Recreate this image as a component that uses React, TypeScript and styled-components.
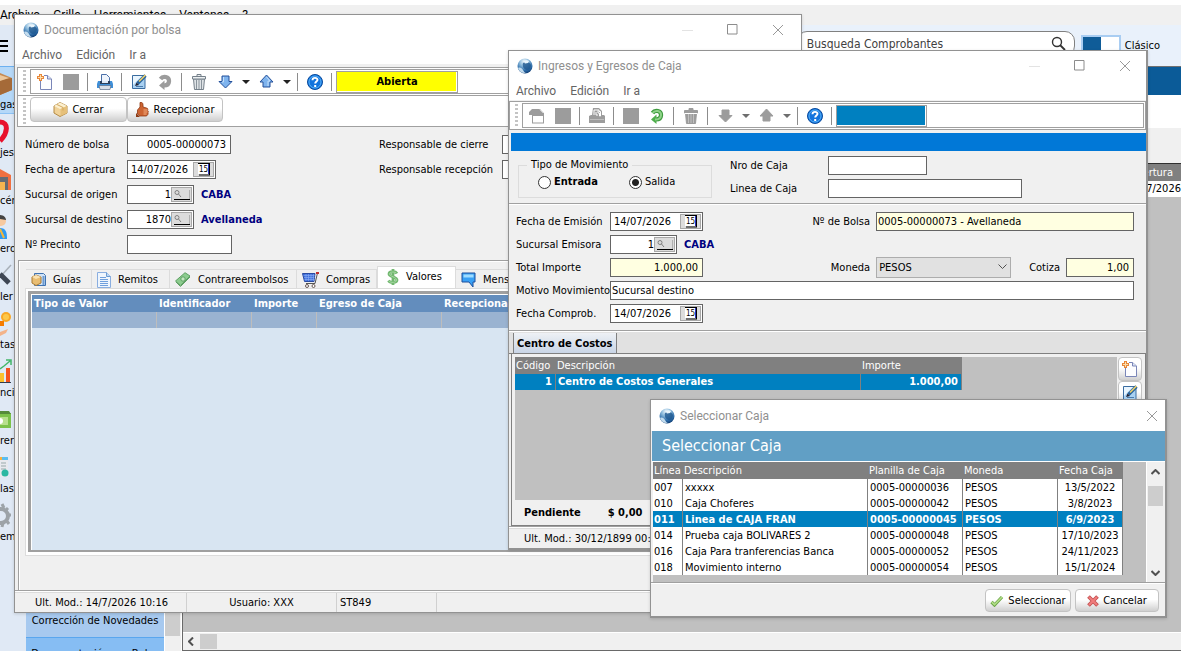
import React from 'react';
import styled, { createGlobalStyle, css } from 'styled-components';

const ui = "'DejaVu Sans Condensed', 'DejaVu Sans', 'Noto Sans', sans-serif";
const chrome = "Roboto, 'Open Sans', sans-serif";

const Global = createGlobalStyle`
  * { box-sizing: border-box; }
  html, body { margin: 0; padding: 0; }
  body { font: 11px/16px ${ui}; color: #000; background: #c0c0c0; overflow: hidden; }
  button, input, select { font: inherit; color: inherit; margin: 0; padding: 0; border-radius: 0; }
  svg { display: block; flex: none; }
  table { border-collapse: separate; border-spacing: 0; }
`;

/* ---------- Main application behind the windows ---------- */

const Shell = styled.div`
  position: relative;
  display: flex;
  flex-direction: column;
  height: 100vh;
  overflow: hidden;
  background: #fff;
  padding-top: 5px;
`;
const MainMenu = styled.nav`
  display: flex;
  gap: 13px;
  height: 20px;
  flex: none;
  background: #f0f0f0;
  font: 12px/20px ${chrome};
`;
const MenuLink = styled.a`
  color: inherit;
  text-decoration: none;
  white-space: nowrap;
`;
const ShellBody = styled.div`
  display: flex;
  flex: 1;
  min-height: 0;
`;
const Rail = styled.nav`
  display: flex;
  flex-direction: column;
  width: 26px;
  flex: none;
  background: #e0e9f5;
`;
const Burger = styled.div`
  display: flex;
  align-items: center;
  height: 41px;
`;
const RailItem = styled.a<{ $on?: boolean }>`
  display: flex;
  flex-direction: column;
  justify-content: flex-end;
  height: 48px;
  color: #000;
  text-decoration: none;
  white-space: nowrap;
  overflow: hidden;
  border-top: 1px solid ${p => (p.$on ? '#6cb0f0' : 'transparent')};
  border-bottom: 1px solid ${p => (p.$on ? '#8cc2f4' : 'transparent')};
  background: ${p => (p.$on ? '#b5d8f8' : 'transparent')};
  svg { margin-bottom: 1px; }
`;
const Workspace = styled.main`
  display: flex;
  flex-direction: column;
  flex: 1;
  min-width: 0;
`;
const TopBar = styled.div`
  display: flex;
  justify-content: flex-end;
  align-items: flex-start;
  flex: none;
  height: 41px;
  padding: 6px 21px 0 0;
  background: #e9f1fb;
`;
const SearchBox = styled.label`
  display: flex;
  align-items: center;
  width: 278px;
  height: 25px;
  margin-right: 6px;
  padding: 0 8px 0 9px;
  background: #fff;
  border: 1px solid #808080;
  border-radius: 10px;
  input {
    flex: 1;
    min-width: 0;
    border: 0;
    outline: 0;
    background: none;
    font-size: 12px;
    color: #404040;
  }
`;
const ModeSwitch = styled.button`
  width: 40px;
  height: 20px;
  margin: 4px 4px 0 0;
  border: 2px solid #a9cdf2;
  background: linear-gradient(90deg, #0f5c98 0 18px, #fff 18px);
`;
const ModeLabel = styled.span`
  padding-top: 7px;
`;
const Band = styled.div<{ $h: number; $bg: string; $line?: string }>`
  flex: none;
  height: ${p => p.$h}px;
  background: ${p => p.$bg};
  border-top: 1px solid ${p => p.$line || p.$bg};
`;
const Lower = styled.div`
  display: flex;
  flex: 1;
  min-height: 0;
`;
const Tree = styled.div`
  display: flex;
  flex-direction: column;
  justify-content: flex-end;
  width: 138px;
  background: #e0e9f5;
`;
const TreeItem = styled.a<{ $on?: boolean }>`
  color: #000;
  text-decoration: none;
  white-space: nowrap;
  text-align: center;
  overflow: hidden;
  background: ${p => (p.$on ? '#86bdf3' : '#a7c9ef')};
  border-top: 1px solid ${p => (p.$on ? '#5aa6ee' : '#a7c9ef')};
  height: ${p => (p.$on ? 14 : 29)}px;
  padding-top: ${p => (p.$on ? 8 : 4)}px;
`;
const TreeScroll = styled.div`
  display: flex;
  width: 18px;
  padding: 0 1px 15px 0;
  background: #f0f0f0;
  border-left: 1px solid #fff;
  border-right: 1px solid #fff;
  &::before { content: ''; flex: 1; background: #cdcdcd; }
`;
const Sheet = styled.div`
  display: flex;
  flex-direction: column;
  flex: 1;
  min-width: 0;
  background: #c0c0c0;
  border-left: 1px solid #696969;
  border-top: 1px solid #303030;
  border-bottom: 1px solid #696969;
`;
const SheetTable = styled.table`
  width: 100%;
  th, td { text-align: right; font-weight: 400; padding: 0; }
  th { height: 17px; padding-right: 8px; background: #808080; color: #fff; }
  td { height: 16px; background: #fff; }
`;
const SheetScroll = styled.div`
  display: flex;
  align-items: center;
  gap: 6px;
  height: 18px;
  margin-top: auto;
  padding-left: 5px;
  background: #f0f0f0;
  border-top: 1px solid #fff;
  &::after { content: ''; width: 17px; height: 15px; background: #cdcdcd; }
`;

/* ---------- Windows ---------- */

const Frame = styled.section<{ $left: number; $top: number; $right: number; $heavy?: boolean }>`
  position: absolute;
  left: ${p => p.$left}px;
  top: ${p => p.$top}px;
  right: ${p => p.$right}px;
  display: flex;
  flex-direction: column;
  background: #f0f0f0;
  border: 1px solid #929292;
  ${p => p.$heavy && css`border-right-width: 2px; border-bottom-width: 2px;`}
  box-shadow: 0 1px 3px rgba(0, 0, 0, 0.15);
`;
const TitleBar = styled.header<{ $h: number; $end: number }>`
  display: flex;
  align-items: center;
  gap: 5px;
  flex: none;
  height: ${p => p.$h}px;
  padding: 0 ${p => p.$end}px 0 8px;
  background: #fff;
  color: #8f8f8f;
  font: 12px/16px ${chrome};
`;
const Title = styled.h1`
  flex: 1;
  margin: 0;
  font: inherit;
`;
const CaptionButtons = styled.div`
  display: flex;
  gap: 34px;
`;
const CaptionButton = styled.button`
  border: 0;
  background: none;
`;
const WindowMenu = styled.nav<{ $h: number }>`
  display: flex;
  gap: 14px;
  flex: none;
  height: ${p => p.$h}px;
  padding: 0 7px;
  background: #fff;
  border-bottom: ${p => p.$h - 20}px solid #f0f0f0;
  color: #646464;
  font: 12px/22px ${chrome};
`;
const Dock = styled.div<{ $inset: number }>`
  flex: none;
  margin-left: ${p => p.$inset}px;
  padding-top: 1px;
  background: #fff;
  border: 1px solid #a0a0a0;
`;
const DockRow = styled.div<{ $second?: boolean }>`
  display: flex;
  height: ${p => (p.$second ? 31 : 26)}px;
  border-top: ${p => (p.$second ? '1px solid #a0a0a0' : '0')};
  padding: ${p => (p.$second ? '1px 0 0' : '0 1px 1px 0')};
  &::before {
    content: '';
    width: 3px;
    margin: 1px 4px 1px 5px;
    background: repeating-linear-gradient(180deg, #c4c4c4 0 2px, #fff 2px 4px);
  }
`;
const ToolBox = styled.div`
  display: flex;
  align-items: center;
  flex: 1;
  padding-left: 1px;
  border: 1px solid #a0a0a0;
`;
const Tool = styled.button<{ $w?: number }>`
  display: flex;
  align-items: center;
  justify-content: center;
  width: ${p => p.$w || 26}px;
  height: 22px;
  border: 0;
  background: none;
`;
const ToolSep = styled.span`
  width: 1px;
  height: 18px;
  margin: 0 4px 0 3px;
  background: #8c8c8c;
`;
const StateBadge = styled.div<{ $bg: string; $w: number }>`
  width: ${p => p.$w}px;
  height: 22px;
  background: ${p => p.$bg};
  border: 1px solid #a0a0a0;
  box-shadow: inset -1px -1px #fff;
  text-align: center;
  font-weight: 700;
  line-height: 20px;
`;
const SoftButton = styled.button<{ $w: number; $h?: number }>`
  display: flex;
  align-items: center;
  justify-content: center;
  gap: 4px;
  width: ${p => p.$w}px;
  height: ${p => p.$h || 25}px;
  border: 1px solid #c3c3c3;
  border-radius: 4px;
  background: linear-gradient(#fff 45%, #e6e6e6 75%, #cfcfcf);
  white-space: nowrap;
`;

/* ---------- Form parts ---------- */

const FormColumn = styled.div<{ $label: number; $gap: number }>`
  display: grid;
  grid-template-columns: ${p => p.$label}px 1fr;
  grid-auto-rows: 19px;
  row-gap: ${p => p.$gap}px;
  align-items: center;
`;
const Label = styled.label`
  padding-top: 1px;
  white-space: nowrap;
`;
const Line = styled.div`
  display: flex;
  align-items: center;
  min-width: 0;
`;
const Field = styled.div<{ $w?: number; $tint?: boolean }>`
  display: flex;
  width: ${p => (p.$w ? p.$w + 'px' : 'auto')};
  flex: ${p => (p.$w ? 'none' : '1')};
  min-width: 0;
  height: 19px;
  border: 1px solid #646464;
  background: ${p => (p.$tint ? '#ffffe1' : '#fff')};
`;
const TextBox = styled.input<{ $align?: string; $pad?: string }>`
  flex: 1;
  width: 0;
  min-width: 0;
  border: 0;
  outline: 0;
  background: none;
  text-align: ${p => p.$align || 'left'};
  padding: ${p => p.$pad || '0 1px'};
`;
const InnerButton = styled.button<{ $w: number }>`
  display: flex;
  align-items: center;
  justify-content: center;
  width: ${p => p.$w}px;
  height: 15px;
  margin: 1px 1px 0 0;
  border: 1px solid #a8a8a8;
  background: #dcdcdc;
`;
const Branch = styled.strong`
  margin-left: 7px;
  color: #000080;
`;
const Divider = styled.div`
  flex: none;
  height: 2px;
  background: linear-gradient(#a0a0a0 1px, #fff 1px);
`;
const StatusBar = styled.footer`
  display: flex;
  flex: none;
  height: 20px;
  line-height: 20px;
  border-top: 1px solid #dcdcdc;
`;
const StatusCell = styled.div<{ $w: number; $center?: boolean; $pad?: number }>`
  width: ${p => p.$w}px;
  padding-left: ${p => p.$pad || 0}px;
  text-align: ${p => (p.$center ? 'center' : 'left')};
  border-right: 1px solid #d0d0d0;
  white-space: nowrap;
`;

/* ---------- Bag window ---------- */

const BagForm = styled.div`
  display: flex;
  padding: 8px 0 6px 10px;
`;
const BagLeft = styled.div`
  width: 354px;
  flex: none;
`;
const BagRight = styled.div`
  flex: 1;
`;
const BagPanel = styled.div`
  margin-left: 3px;
  padding: 5px 0 34px 7px;
  border: solid #a0a0a0;
  border-width: 1px 0 0 1px;
  box-shadow: inset 1px 1px #fff;
`;
const Tabs = styled.div`
  display: flex;
  align-items: flex-end;
  height: 22px;
`;
const Tab = styled.button<{ $w: number; $on?: boolean }>`
  display: flex;
  align-items: center;
  gap: 7px;
  width: ${p => p.$w}px;
  height: ${p => (p.$on ? 22 : 19)}px;
  padding: ${p => (p.$on ? '0 0 1px 9px' : '1px 0 0 5px')};
  border: 1px solid #dcdcdc;
  border-left-width: ${p => (p.$on ? 1 : 0)}px;
  border-bottom: 0;
  background: ${p => (p.$on ? '#fff' : '#f0f0f0')};
  white-space: nowrap;
  overflow: hidden;
`;
const TabPage = styled.div`
  margin-left: -1px;
  padding: 2px 0 3px 2px;
  background: #fff;
  border: 1px solid #dcdcdc;
`;
const ValuesFrame = styled.div`
  height: 261px;
  border: solid #a0a0a0;
  border-width: 3px 0 2px 3px;
  padding: 1px 0 0 1px;
  background: #d8e5f2;
  box-shadow: inset 1px 1px #fff;
`;
const ValuesTable = styled.table`
  table-layout: fixed;
  width: 100%;
  th {
    height: 17px;
    padding: 0 0 0 2px;
    background: #638dbd;
    color: #fff;
    text-align: left;
    white-space: nowrap;
  }
  td {
    height: 16px;
    padding: 0;
    background: #9ab3d1;
    border-right: 1px solid #bdbdbd;
  }
`;

/* ---------- Cash movement window ---------- */

const BlueBar = styled.div`
  height: 18px;
  margin: 3px 0 0 2px;
  background: #0178d7;
`;
const CashTop = styled.div`
  display: flex;
  padding: 5px 0 5px 9px;
`;
const MoveKind = styled.fieldset`
  display: flex;
  width: 194px;
  height: 39px;
  margin: 3px 18px 0 0;
  padding: 0 0 0 19px;
  border: 1px solid #dcdcdc;
  legend { margin-left: -11px; padding: 0 4px; line-height: 12px; }
`;
const Choice = styled.label<{ $w?: number }>`
  display: flex;
  align-items: center;
  gap: 3px;
  height: 22px;
  width: ${p => p.$w || 70}px;
`;
const Radio = styled.input`
  appearance: none;
  width: 13px;
  height: 13px;
  border: 1px solid #333;
  border-radius: 50%;
  background: #fff;
  &:checked { background: radial-gradient(#222 0 3px, #fff 4px); }
`;
const CashForm = styled.div`
  padding: 7px 12px 7px 7px;
`;
const SideLabel = styled(Label)<{ $push?: boolean }>`
  margin-left: ${p => (p.$push ? 'auto' : '18px')};
  margin-right: 6px;
`;
const Currency = styled.div`
  position: relative;
  width: 135px;
  height: 21px;
  svg { position: absolute; right: 4px; top: 7px; pointer-events: none; }
`;
const CurrencySelect = styled.select`
  appearance: none;
  width: 100%;
  height: 21px;
  padding-left: 2px;
  border: 1px solid #adadad;
  background: #e1e1e1;
`;
const CostTabs = styled.div`
  display: flex;
  align-items: flex-end;
  height: 22px;
  padding-left: 4px;
  background: #e1e1e1;
  border-bottom: 1px solid #808080;
`;
const CostTab = styled.button`
  height: 20px;
  padding: 1px 3px 0;
  border: 1px solid #808080;
  border-width: 0 1px;
  background: linear-gradient(#eef1f5, #c9d5e6);
  font-weight: 700;
`;
const CostPane = styled.div`
  display: flex;
  margin-left: 2px;
  padding: 3px 3px 0;
  border-left: 1px solid #808080;
  border-right: 1px solid #808080;
`;
const CostGrid = styled.div`
  flex: 1;
  min-height: 143px;
  background: #c0c0c0;
`;
const CostTable = styled.table`
  table-layout: fixed;
  width: 447px;
  line-height: 14px;
  th { height: 17px; padding: 0 0 0 1px; background: #808080; color: #fff; font-weight: 400; text-align: left; }
  td { height: 16px; padding: 0 3px 0 2px; background: #0080c0; color: #fff; font-weight: 700; border-right: 1px solid #808080; }
`;
const SideButtons = styled.div`
  display: flex;
  flex-direction: column;
  margin-left: 1px;
`;
const Pending = styled.div`
  display: flex;
  gap: 27px;
  height: 26px;
  margin-left: 2px;
  padding-left: 12px;
  line-height: 26px;
  font-weight: 700;
  border: solid #808080;
  border-width: 0 1px 1px;
`;

/* ---------- Picker dialog ---------- */

const Banner = styled.h2`
  height: 31px;
  margin: 0 0 0 1px;
  padding-left: 10px;
  border-bottom: 1px solid #fff;
  background: #619fc5;
  color: #fff;
  font: 16px/30px ${ui};
`;
const PickerBody = styled.div`
  display: flex;
  height: 120px;
  margin: 0 2px;
  background: #c0c0c0;
`;
const PickerGrid = styled.div`
  flex: 1;
`;
const PickerTable = styled.table`
  table-layout: fixed;
  width: 470px;
  line-height: 14px;
  th { height: 17px; padding: 1px 0 0 1px; background: #808080; color: #fff; font-weight: 400; text-align: left; white-space: nowrap; }
`;
const PickerRow = styled.tr<{ $on?: boolean }>`
  td {
    height: 16px;
    padding: 2px 0 0 2px;
    white-space: nowrap;
    overflow: hidden;
    background: ${p => (p.$on ? '#0080c0' : '#fff')};
    color: ${p => (p.$on ? '#fff' : '#000')};
    font-weight: ${p => (p.$on ? 700 : 400)};
    border-right: 1px solid #808080;
  }
  td:first-child { padding-left: 1px; }
  td:last-child { text-align: center; padding-left: 0; }
`;
const PickerScroll = styled.div`
  display: flex;
  flex-direction: column;
  align-items: center;
  width: 17px;
  padding: 7px 0 6px;
  background: #f0f0f0;
  border-left: 1px solid #fff;
  svg:last-child { margin-top: auto; }
`;
const Thumb = styled.div`
  width: 15px;
  height: 20px;
  margin-top: 11px;
  background: #cdcdcd;
`;
const PickerFooter = styled.footer`
  display: flex;
  justify-content: flex-end;
  gap: 4px;
  height: 34px;
  padding: 6px 6px 0;
  border-top: 1px solid #a0a0a0;
  box-shadow: inset 0 1px #fff;
`;

/* ---------- Drawings ---------- */

const Globe = () => (
  <svg width="16" height="16" viewBox="0 0 16 16">
    <defs>
      <radialGradient id="globe" cx="0.45" cy="0.2" r="0.85">
        <stop offset="0" stopColor="#f2f9fd" /><stop offset="0.35" stopColor="#8dbbdc" /><stop offset="0.7" stopColor="#2c6ba8" /><stop offset="1" stopColor="#0b3468" />
      </radialGradient>
    </defs>
    <circle cx="8" cy="8" r="7.5" fill="url(#globe)" />
    <path d="M6 5c3-2 7-1 8 2 0 3-2 5-4 5-3 0-5-4-4-7z" fill="#1d568f" opacity="0.8" />
    <path d="M1 10c2-1 4 0 5 2s2 3 3 3c-4 .6-7-1.500-8-5z" fill="#c3dcee" />
    <path d="M7 4c1-2 3-2.500 5-1l-1 2-3 .5z" fill="#e9f5fc" />
  </svg>
);
const MinIcon = () => <svg width="11" height="11"><path d="M0 6.500h11" stroke="#e3e3e3" /></svg>;
const MaxIcon = () => <svg width="11" height="11"><path d="M.5.5h9.500v9.500H.5z" fill="none" stroke="#8c8c8c" /></svg>;
const CloseIcon = () => <svg width="12" height="12"><path d="M1 1l10 10M11 1L1 11" stroke="#999" /></svg>;
const NewIcon = ({ off }: { off?: boolean }) => off ? (
  <svg width="16" height="16">
    <path d="M0 4l3-3h8l4 4v10.500H3V7H0z" fill="#9c9c9c" /><path d="M4 8h10v6.500H4z" fill="#fff" /><path d="M11 1.500l3.500 3.500" stroke="#fff" />
  </svg>
) : (
  <svg width="16" height="16" viewBox="0 0 16 16">
    <path d="M3.500 4.500V15.500h11V5L10.500 1.500H7" fill="#fdfdff" stroke="#7a86b8" /><path d="M10.500 1.500V5h4" fill="#dfe6f6" stroke="#7a86b8" />
    <path d="M3.500 0v7M0 3.500h7" stroke="#e8873a" strokeWidth="3" /><path d="M3.500 1v5M1 3.500h5" stroke="#fbe0b0" />
  </svg>
);
const SquareIcon = () => <svg width="16" height="16"><path d="M0 0h16v16H0z" fill="#9c9c9c" /></svg>;
const PrinterIcon = ({ off }: { off?: boolean }) => off ? (
  <svg width="16" height="16" viewBox="0 0 16 16">
    <path d="M4 0h6l3 3v4h2l1 1v7H0V8l2-1h1z" fill="#9c9c9c" /><path d="M5 2h5v1.500h1.500V8h-1V5H9V2.500M5 2v5" fill="none" stroke="#fff" /><path d="M7 4v3h2" fill="none" stroke="#fff" /><path d="M1 11.500h14" stroke="#bdbdbd" />
  </svg>
) : (
  <svg width="16" height="16" viewBox="0 0 16 16">
    <path d="M4.500 8V.5h5l3 3V8" fill="#eef4fc" stroke="#4a6fa8" />
    <path d="M1 7h14l1 3v4H0v-4z" fill="#3f8fd8" />
    <path d="M3 7h10v3H3z" fill="#2b3f5c" /><path d="M5 7h6v2H5z" fill="#dfeaf7" />
    <path d="M2 11.500h12l-1 4H3z" fill="#d9dfe8" stroke="#5a6b85" strokeWidth="0.700" />
  </svg>
);
const EditIcon = () => (
  <svg width="16" height="16" viewBox="0 0 16 16">
    <path d="M1.500 1.500h12.500v13H1.500z" fill="#a9d1f2" stroke="#3a6ca0" /><path d="M2 11L11 2H2z" fill="#e9f5fe" />
    <path d="M14.500 1.500L6.500 9.500" stroke="#27629c" strokeWidth="3.200" /><path d="M14.500 1L8 7.500" stroke="#efcf68" strokeWidth="1.600" /><path d="M4 12l1.500-3.500L8 11z" fill="#223" />
    <path d="M5 12.500h7" stroke="#4b7cae" />
  </svg>
);
const UndoIcon = ({ off }: { off?: boolean }) => (
  <svg width="16" height="16" viewBox="0 0 16 16">
    <path d="M3.500 5C6 1.500 12.500 2.500 12 7.500c-.2 3-2.500 4-5 4" fill="none" stroke={off ? '#9c9c9c' : '#3f9a3f'} strokeWidth="4.200" />
    <path d="M7.500 6.500V16L2 11.500z" fill={off ? '#9c9c9c' : '#4fae4c'} />
    {!off && <path d="M3.500 5C6 1.500 12.500 2.500 12 7.500c-.2 3-2.500 4-6 4" fill="none" stroke="#8ed388" strokeWidth="2" />}
  </svg>
);
const TrashIcon = ({ off }: { off?: boolean }) => (
  <svg width="16" height="16" viewBox="0 0 16 16">
    <path d="M2.500 5h11l-1 10.500h-9z" fill={off ? '#9c9c9c' : '#dfe3e6'} stroke={off ? '#9c9c9c' : '#75808a'} />
    <path d="M5.500 6v9M8 6v9M10.500 6v9" stroke={off ? '#c0c0c0' : '#8a949c'} />
    <path d="M1.500 2.500h13V5h-13zM6 .5h4v2H6z" fill={off ? '#9c9c9c' : '#eceff1'} stroke={off ? '#9c9c9c' : '#75808a'} />
    {off && <path d="M2 5.500h12" stroke="#fff" />}
  </svg>
);
const ArrowIcon = ({ up, off }: { up?: boolean; off?: boolean }) => (
  <svg width="15" height="15" viewBox="0 0 15 15">
    <path d={up ? 'M7.500 1L14 8h-3v5H4V8H1z' : 'M7.500 14L1 7.500h3V2h7v5.500h3z'} fill={off ? '#9c9c9c' : '#7fb4ee'} stroke={off ? '#9c9c9c' : '#24509a'} />
    {!off && <path d={up ? 'M7.500 3L11 7H9v5' : 'M5.500 3v5H4'} fill="none" stroke="#c5e0fa" />}
  </svg>
);
const Caret = ({ off }: { off?: boolean }) => <svg width="8" height="4"><path d="M0 0h8L4 4z" fill={off ? '#6e6e6e' : '#222'} /></svg>;
const HelpIcon = () => (
  <svg width="16" height="16" viewBox="0 0 16 16">
    <circle cx="8" cy="8" r="7.500" fill="#1273dd" stroke="#0a4a9c" /><circle cx="8" cy="8" r="6" fill="none" stroke="#57b0f5" />
    <path d="M5.500 6.200C5.500 3 10.700 3.200 10.500 6c-.1 1.500-2.300 1.700-2.300 3.500" fill="none" stroke="#fff" strokeWidth="1.900" /><path d="M7.200 11h2v2h-2z" fill="#fff" />
  </svg>
);
const BoxIcon = () => (
  <svg width="15" height="15" viewBox="0 0 15 15">
    <path d="M1 4l6-3.500L14 4v7l-7 3.500L1 11z" fill="#f0d298" stroke="#b48a44" /><path d="M1 4l6 3 7-3-7-3.500z" fill="#fcf0d0" /><path d="M7.500 7v7L14 11V4z" fill="#e6c07a" />
    <path d="M4 2.500l6 3v3" fill="none" stroke="#d2a75c" />
  </svg>
);
const ThumbIcon = () => (
  <svg width="14" height="15" viewBox="0 0 14 15">
    <path d="M4 .5C6 0 7 1 7 3v2l3.500 1c1.500.3 1.500 1.500 1 2.300 1 .5 1 1.700.5 2.200.5 1-.5 3.500-2 3.500H4L1.500 12V8L4 5z" fill="#cd6432" stroke="#8f3a14" strokeWidth="0.800" />
    <path d="M7.500 8h4M7.500 10h4M7.500 12h3" stroke="#f3ad80" /><path d="M0 11l4 4H0z" fill="#8c3a14" />
  </svg>
);
const CalendarIcon = () => (
  <svg width="14" height="13" viewBox="0 0 14 13">
    <path d="M1 1h11v10H1z" fill="#fff" /><path d="M1 .5h12M12.500 1v11M2 12h11" stroke="#000" /><path d="M11.500 1v10" stroke="#3030c0" />
    <text x="2" y="9" fontSize="8" fontFamily="'DejaVu Sans Condensed'">15</text>
  </svg>
);
const LookupIcon = () => (
  <svg width="18" height="12" viewBox="0 0 18 12">
    <circle cx="4" cy="3.500" r="2" fill="none" stroke="#808080" /><path d="M5.500 5l2.500 3" stroke="#808080" /><path d="M1 10.500h16" stroke="#000" /><path d="M16.500 1v9" stroke="#b0b0b0" />
  </svg>
);
const CheckIcon = () => (
  <svg width="14" height="12" viewBox="0 0 14 12">
    <path d="M1.500 7l3 3L12 2" fill="none" stroke="#6ca548" strokeWidth="3.200" /><path d="M1.800 7.200l2.700 2.500L12 2" fill="none" stroke="#b3df88" strokeWidth="1.600" />
  </svg>
);
const CrossIcon = () => (
  <svg width="12" height="12" viewBox="0 0 12 12">
    <path d="M1.500 1.500l9 9M10.500 1.500l-9 9" stroke="#c25050" strokeWidth="3.800" /><path d="M2 2l8 8M10 2l-8 8" stroke="#f07c7c" strokeWidth="2.200" />
  </svg>
);
const Chevron = ({ d, w = 9, h = 6, sw = 2 }: { d: string; w?: number; h?: number; sw?: number }) => (
  <svg width={w} height={h}><path d={d} fill="none" stroke="#505050" strokeWidth={sw} /></svg>
);
const GuideIcon = () => (
  <svg width="15" height="15" viewBox="0 0 15 15">
    <path d="M3.500 1.500h9l2 2v10h-11z" fill="#cfe2f7" stroke="#3f72b0" /><path d="M12.500 4v9" stroke="#6d9bd0" strokeWidth="2" />
    <path d="M1 5l4-2 5 2v6l-5 2.500L1 11z" fill="#e9bd72" stroke="#a87a34" /><path d="M1 5l4 2 5-2-5-2z" fill="#fae3b4" />
  </svg>
);
const SheetIcon = () => (
  <svg width="14" height="16" viewBox="0 0 14 16">
    <path d="M.5.5h9l4 4v11H.5z" fill="#eef5fd" stroke="#8aaee0" /><path d="M3 5.500h6M3 7.500h8M3 9.500h8M3 11.500h8M3 13.500h8" stroke="#6f9fdc" /><path d="M9.500.5v4h4" fill="#bcd6f2" stroke="#6a9bd2" />
  </svg>
);
const NotesIcon = () => (
  <svg width="16" height="15" viewBox="0 0 16 15">
    <path d="M.5 9L10 .7l5 3.300-9.500 9.500z" fill="#8ccc8e" stroke="#5fa064" /><path d="M1 10l4.500 4.500L15 5" fill="none" stroke="#5fa064" /><circle cx="8" cy="7" r="2.200" fill="#c5e8c2" stroke="#5fa064" />
  </svg>
);
const CartIcon = () => (
  <svg width="17" height="16" viewBox="0 0 17 16">
    <path d="M.5 1.500h12.500L12 9.500H2.500z" fill="#3f6fdd" stroke="#2a4aa0" /><path d="M1.500 3.500h11M2 5.500h10.500M2.500 7.500h10M4 2v7M6.500 2v7M9 2v7M11.500 2v7" stroke="#8fb0f5" strokeWidth="0.600" />
    <path d="M15.500 1L13 11.500H4" fill="none" stroke="#555" /><path d="M14 0h3v2h-3z" fill="#c03030" /><circle cx="5" cy="14" r="1.500" fill="#fff" stroke="#6b5a55" /><circle cx="11.500" cy="14" r="1.500" fill="#fff" stroke="#6b5a55" />
  </svg>
);
const MoneyIcon = () => (
  <svg width="12" height="16" viewBox="0 0 12 16">
    <path d="M10 4.500C8.500 2 2 2.200 2 5S10 8 10 11 3 14.200 1.500 11.500M6 0v16" fill="none" stroke="#72b870" strokeWidth="2.800" /><path d="M9.500 4.500C8.500 2.500 2.500 2.500 2.500 5s7 3 7 6-6 3-7.500 1" fill="none" stroke="#a6d9a2" />
  </svg>
);
const MessageIcon = () => (
  <svg width="15" height="16" viewBox="0 0 15 16">
    <path d="M1 1h13v9h-2v5l-4-5H1z" fill="#38a0f5" stroke="#1c4f9c" /><path d="M2.500 2.500h10v3h-10z" fill="#9fdcff" />
  </svg>
);
const LensIcon = () => (
  <svg width="15" height="15"><circle cx="6" cy="6" r="4.500" fill="none" stroke="#333" strokeWidth="1.400" /><path d="M9 9l5 5" stroke="#333" strokeWidth="1.800" /></svg>
);

const railIcons: React.ReactNode[] = [
  <><path d="M0 2l12 5v12L0 24z" fill="#c68b52" /><path d="M0 9l12-2v12L0 24z" fill="#a56a38" /><path d="M0 4l9 3-9 3z" fill="#ebc79b" /></>,
  <><path d="M0 3C9 3 8 14 0 22" fill="none" stroke="#e8112d" strokeWidth="5" /></>,
  <><path d="M0 2l11 6v15H0z" fill="#f07040" /><path d="M0 10h8v13H0z" fill="#666b73" /><path d="M0 15h5v8H0z" fill="#f5b550" /></>,
  <><circle cx="1" cy="6" r="5" fill="#f6c9a0" /><path d="M0 0c4 0 6 3 6 5L0 4z" fill="#444" /><path d="M0 13c6 0 7 4 7 11H0z" fill="#2f9af2" /><path d="M0 14l4 9" stroke="#f5b73a" strokeWidth="2" /></>,
  <><path d="M1 13L11 2" stroke="#a8b0b8" strokeWidth="1.500" /><path d="M0 11l9 9" stroke="#3e4654" strokeWidth="5" /></>,
  <><circle cx="6" cy="6" r="5" fill="#f9a825" /><circle cx="6" cy="6" r="3" fill="#fdc84a" /><path d="M0 10h4v5H0z" fill="#f57c00" /><path d="M0 21l8-3-2 4-6 3z" fill="#f3b38a" /></>,
  <><path d="M0 10l4-3 6-5M6 1h5v5" fill="none" stroke="#43b76a" strokeWidth="1.500" /><path d="M0 14h4v9H0z" fill="#fbc02d" /><path d="M6 9h4v14H6z" fill="#f4511e" /><path d="M0 23.500h11" stroke="#333c4e" /></>,
  <><path d="M0 6h11v15H0z" fill="#7cc24a" /><path d="M0 4h9l2 3H0z" fill="#558b3a" /><path d="M0 10h8v8H0z" fill="#b7e08c" /><circle cx="0" cy="14" r="3" fill="#fff" /></>,
  <><path d="M0 2h8v20H0z" fill="#e8eaee" /><path d="M0 2h2v3H0z" fill="#fbb13c" /><path d="M2 2h6v3H2z" fill="#5bbef0" /><path d="M1 8h5M1 11h5M1 14h5" stroke="#9aa" /><circle cx="5" cy="18" r="3.500" fill="#2bb8a3" /></>,
  <><circle cx="1" cy="13" r="7" fill="none" stroke="#9da3a8" strokeWidth="4" /><path d="M2 1l2 4M8 5L5 8M11 12H7M9 21l-3-4M2 24l1-4" stroke="#9da3a8" strokeWidth="3" /></>,
];
const railLabels = ['gas', 'jes', 'cén', 'ero', 'ler', 'tas', 'ncia', 'rerí', 'las', 'ema'];

/* ---------- Composite pieces ---------- */

const Caption = ({ title, small, end }: { title: string; small?: boolean; end: number }) => (
  <TitleBar $h={small ? 31 : 29} $end={end}>
    <Globe />
    <Title>{title}</Title>
    <CaptionButtons>
      {!small && <CaptionButton aria-label="Minimizar"><MinIcon /></CaptionButton>}
      {!small && <CaptionButton aria-label="Maximizar"><MaxIcon /></CaptionButton>}
      <CaptionButton aria-label="Cerrar ventana"><CloseIcon /></CaptionButton>
    </CaptionButtons>
  </TitleBar>
);

const Menu = ({ h }: { h: number }) => (
  <WindowMenu $h={h}>
    {['Archivo', 'Edición', 'Ir a'].map(m => <MenuLink key={m} href="#">{m}</MenuLink>)}
  </WindowMenu>
);

const Tools = ({ off, badge, badgeColor, badgeWidth }: { off?: boolean; badge?: string; badgeColor: string; badgeWidth: number }) => (
  <ToolBox>
    <Tool aria-label="Nuevo"><NewIcon off={off} /></Tool>
    <Tool aria-label="Guardar"><SquareIcon /></Tool>
    <ToolSep />
    <Tool aria-label="Imprimir"><PrinterIcon off={off} /></Tool>
    <ToolSep />
    <Tool aria-label="Modificar">{off ? <SquareIcon /> : <EditIcon />}</Tool>
    <Tool aria-label="Deshacer"><UndoIcon off={!off} /></Tool>
    <ToolSep />
    <Tool aria-label="Eliminar"><TrashIcon off={off} /></Tool>
    {off && <ToolSep />}
    <Tool aria-label="Siguiente"><ArrowIcon off={off} /></Tool>
    <Tool $w={15} aria-label="Más siguientes"><Caret off={off} /></Tool>
    <Tool aria-label="Anterior"><ArrowIcon up off={off} /></Tool>
    <Tool $w={15} aria-label="Más anteriores"><Caret off={off} /></Tool>
    <ToolSep />
    <Tool aria-label="Ayuda"><HelpIcon /></Tool>
    <ToolSep />
    <StateBadge $bg={badgeColor} $w={badgeWidth}>{badge}</StateBadge>
  </ToolBox>
);

const DateField = ({ id, w }: { id: string; w: number }) => (
  <Field $w={w}>
    <TextBox id={id} defaultValue="14/07/2026" $pad="0 0 0 3px" />
    <InnerButton $w={21} aria-label="Calendario"><CalendarIcon /></InnerButton>
  </Field>
);
const CodeField = ({ id, value }: { id: string; value: string }) => (
  <Field $w={67}>
    <TextBox id={id} defaultValue={value} $align="right" $pad="0" />
    <InnerButton $w={21} aria-label="Buscar"><LookupIcon /></InnerButton>
  </Field>
);

const BagWindow = () => (
  <Frame $left={14} $top={14} $right={379}>
    <Caption title="Documentación por bolsa" end={17} />
    <Menu h={23} />
    <Dock $inset={2}>
      <DockRow><Tools badge="Abierta" badgeColor="#ffff00" badgeWidth={122} /></DockRow>
      <DockRow $second>
        <SoftButton $w={97}><BoxIcon />Cerrar</SoftButton>
        <SoftButton $w={96}><ThumbIcon />Recepcionar</SoftButton>
      </DockRow>
    </Dock>
    <BagForm>
      <BagLeft>
        <FormColumn $label={102} $gap={6}>
          <Label htmlFor="bolsa">Número de bolsa</Label>
          <Field $w={104}><TextBox id="bolsa" defaultValue="0005-00000073" $align="right" $pad="0 4px" /></Field>
          <Label htmlFor="apertura">Fecha de apertura</Label>
          <DateField id="apertura" w={89} />
          <Label htmlFor="origen">Sucursal de origen</Label>
          <Line><CodeField id="origen" value="1" /><Branch>CABA</Branch></Line>
          <Label htmlFor="destino">Sucursal de destino</Label>
          <Line><CodeField id="destino" value="1870" /><Branch>Avellaneda</Branch></Line>
          <Label htmlFor="precinto">Nº Precinto</Label>
          <Field $w={105}><TextBox id="precinto" /></Field>
        </FormColumn>
      </BagLeft>
      <BagRight>
        <FormColumn $label={123} $gap={6}>
          <Label htmlFor="cierre">Responsable de cierre</Label>
          <Field $w={200}><TextBox id="cierre" /></Field>
          <Label htmlFor="recepcion">Responsable recepción</Label>
          <Field $w={200}><TextBox id="recepcion" /></Field>
        </FormColumn>
      </BagRight>
    </BagForm>
    <BagPanel>
      <Tabs>
        <Tab $w={66}><GuideIcon />Guías</Tab>
        <Tab $w={78}><SheetIcon />Remitos</Tab>
        <Tab $w={127}><NotesIcon />Contrareembolsos</Tab>
        <Tab $w={80}><CartIcon />Compras</Tab>
        <Tab $w={79} $on><MoneyIcon />Valores</Tab>
        <Tab $w={90}><MessageIcon />Mensajes</Tab>
      </Tabs>
      <TabPage>
        <ValuesFrame>
          <ValuesTable>
            <colgroup><col width="125" /><col width="95" /><col width="65" /><col width="125" /><col /></colgroup>
            <thead><tr><th>Tipo de Valor</th><th>Identificador</th><th>Importe</th><th>Egreso de Caja</th><th>Recepcionado</th></tr></thead>
            <tbody><tr><td /><td /><td /><td /><td /></tr></tbody>
          </ValuesTable>
        </ValuesFrame>
      </TabPage>
    </BagPanel>
    <Divider />
    <StatusBar>
      <StatusCell $w={172} $pad={20}>Ult. Mod.: 14/7/2026 10:16</StatusCell>
      <StatusCell $w={150} $center>Usuario: XXX</StatusCell>
      <StatusCell $w={100} $pad={3}>ST849</StatusCell>
    </StatusBar>
  </Frame>
);

const CashWindow = () => (
  <Frame $left={508} $top={50} $right={33} $heavy>
    <Caption title="Ingresos y Egresos de Caja" end={15} />
    <Menu h={21} />
    <Dock $inset={0}>
      <DockRow><Tools off badgeColor="#0080c0" badgeWidth={91} /></DockRow>
    </Dock>
    <BlueBar />
    <CashTop>
      <MoveKind>
        <legend>Tipo de Movimiento</legend>
        <Choice $w={91}><Radio type="radio" name="tipo" /><b>Entrada</b></Choice>
        <Choice><Radio type="radio" name="tipo" defaultChecked />Salida</Choice>
      </MoveKind>
      <FormColumn $label={98} $gap={4}>
        <Label htmlFor="nro">Nro de Caja</Label>
        <Field $w={99}><TextBox id="nro" /></Field>
        <Label htmlFor="linea">Linea de Caja</Label>
        <Field $w={194}><TextBox id="linea" /></Field>
      </FormColumn>
    </CashTop>
    <Divider />
    <CashForm>
      <FormColumn $label={94} $gap={4}>
        <Label htmlFor="emision">Fecha de Emisión</Label>
        <Line>
          <DateField id="emision" w={93} />
          <SideLabel $push htmlFor="nbolsa">Nº de Bolsa</SideLabel>
          <Field $w={258} $tint><TextBox id="nbolsa" defaultValue="0005-00000073 - Avellaneda" /></Field>
        </Line>
        <Label htmlFor="emisora">Sucursal Emisora</Label>
        <Line><CodeField id="emisora" value="1" /><Branch>CABA</Branch></Line>
        <Label htmlFor="total">Total Importe</Label>
        <Line>
          <Field $w={93} $tint><TextBox id="total" defaultValue="1.000,00" $align="right" $pad="0 4px" /></Field>
          <SideLabel $push htmlFor="moneda">Moneda</SideLabel>
          <Currency>
            <CurrencySelect id="moneda" defaultValue="PESOS"><option>PESOS</option></CurrencySelect>
            <Chevron d="M.5.5l4 4 4-4" sw={1} />
          </Currency>
          <SideLabel htmlFor="cotiza">Cotiza</SideLabel>
          <Field $w={68} $tint><TextBox id="cotiza" defaultValue="1,00" $align="right" $pad="0 4px" /></Field>
        </Line>
        <Label htmlFor="motivo">Motivo Movimiento</Label>
        <Field><TextBox id="motivo" defaultValue="Sucursal destino" /></Field>
        <Label htmlFor="comprob">Fecha Comprob.</Label>
        <DateField id="comprob" w={93} />
      </FormColumn>
    </CashForm>
    <Divider />
    <CostTabs><CostTab>Centro de Costos</CostTab></CostTabs>
    <CostPane>
      <CostGrid>
        <CostTable>
          <colgroup><col width="41" /><col width="305" /><col width="101" /></colgroup>
          <thead><tr><th>Código</th><th>Descripción</th><th>Importe</th></tr></thead>
          <tbody><tr><td align="right">1</td><td>Centro de Costos Generales</td><td align="right">1.000,00</td></tr></tbody>
        </CostTable>
      </CostGrid>
      <SideButtons>
        <SoftButton $w={24} $h={24} aria-label="Agregar"><NewIcon /></SoftButton>
        <SoftButton $w={24} $h={24} aria-label="Editar"><EditIcon /></SoftButton>
      </SideButtons>
    </CostPane>
    <Pending><span>Pendiente</span><span>$ 0,00</span></Pending>
    <Divider />
    <StatusBar><StatusCell $w={200} $pad={15}>Ult. Mod.: 30/12/1899 00:00</StatusCell></StatusBar>
  </Frame>
);

const boxes = [
  ['007', 'xxxxx', '0005-00000036', '13/5/2022'],
  ['010', 'Caja Choferes', '0005-00000042', '3/8/2023'],
  ['011', 'Linea de CAJA FRAN', '0005-00000045', '6/9/2023'],
  ['014', 'Prueba caja BOLIVARES 2', '0005-00000048', '17/10/2023'],
  ['016', 'Caja Para tranferencias Banca', '0005-00000052', '24/11/2023'],
  ['018', 'Movimiento interno', '0005-00000054', '15/1/2024'],
];

const PickerWindow = () => (
  <Frame $left={650} $top={399} $right={14} $heavy>
    <Caption title="Seleccionar Caja" small end={7} />
    <Banner>Seleccionar Caja</Banner>
    <PickerBody>
      <PickerGrid>
        <PickerTable>
          <colgroup><col width="30" /><col width="185" /><col width="95" /><col width="95" /><col width="65" /></colgroup>
          <thead><tr><th>Línea</th><th>Descripción</th><th>Planilla de Caja</th><th>Moneda</th><th>Fecha Caja</th></tr></thead>
          <tbody>
            {boxes.map(([line, name, sheet, date]) => (
              <PickerRow key={line} $on={line === '011'}>
                <td>{line}</td><td>{name}</td><td>{sheet}</td><td>PESOS</td><td>{date}</td>
              </PickerRow>
            ))}
          </tbody>
        </PickerTable>
      </PickerGrid>
      <PickerScroll>
        <Chevron d="M.5 5l4-4 4 4" />
        <Thumb />
        <Chevron d="M.5 1l4 4 4-4" />
      </PickerScroll>
    </PickerBody>
    <PickerFooter>
      <SoftButton $w={86} $h={23}><CheckIcon />Seleccionar</SoftButton>
      <SoftButton $w={84} $h={23}><CrossIcon />Cancelar</SoftButton>
    </PickerFooter>
  </Frame>
);

export default function App() {
  return (
    <>
      <Global />
      <Shell>
        <MainMenu>
          {['Archivo', 'Grilla', 'Herramientas', 'Ventanas', '?'].map(m => <MenuLink key={m} href="#">{m}</MenuLink>)}
        </MainMenu>
        <ShellBody>
          <Rail>
            <Burger><svg width="8" height="14"><path d="M0 2h8M0 7h8M0 12h8" stroke="#000" strokeWidth="2" /></svg></Burger>
            {railLabels.map((label, i) => (
              <RailItem key={label} href="#" $on={i === 0}>
                <svg width="12" height="25">{railIcons[i]}</svg>
                {label}
              </RailItem>
            ))}
          </Rail>
          <Workspace>
            <TopBar>
              <SearchBox>
                <input aria-label="Busqueda" defaultValue="Busqueda Comprobantes" />
                <LensIcon />
              </SearchBox>
              <ModeSwitch aria-label="Cambiar modo" />
              <ModeLabel>Clásico</ModeLabel>
            </TopBar>
            <Band $h={29} $bg="#0b5b98" $line="#707070" />
            <Band $h={33} $bg="#ffffff" />
            <Band $h={35} $bg="#f0f0f0" />
            <Lower>
              <Tree>
                <TreeItem href="#">Corrección de Novedades</TreeItem>
                <TreeItem href="#" $on>Documentación por Bolsa</TreeItem>
              </Tree>
              <TreeScroll />
              <Sheet>
                <SheetTable>
                  <thead><tr><th>Fecha Apertura</th></tr></thead>
                  <tbody><tr><td>14/07/2026</td></tr></tbody>
                </SheetTable>
                <SheetScroll><Chevron d="M5 .5l-4 4 4 4" w={6} h={9} /></SheetScroll>
              </Sheet>
            </Lower>
          </Workspace>
        </ShellBody>
        <BagWindow />
        <CashWindow />
        <PickerWindow />
      </Shell>
    </>
  );
}
